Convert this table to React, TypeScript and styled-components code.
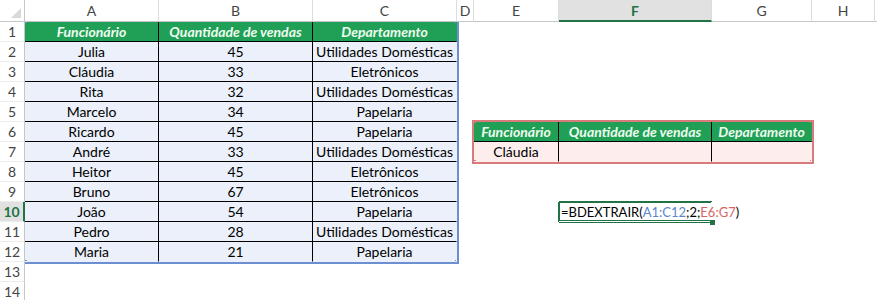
import React from "react";
import styled, { createGlobalStyle, css } from "styled-components";

const TABLE_GREEN = "#20a057";
const EXCEL_GREEN = "#217346";
const REF_BLUE = "#6b8fd0";
const REF_PINK = "#d77b7d";

const GlobalStyle = createGlobalStyle`
  html, body {
    margin: 0;
    padding: 0;
    background: #fff;
    overflow: hidden;
  }
  body {
    font-family: Lato, "Liberation Sans", sans-serif;
  }
`;

const Sheet = styled.div`
  display: grid;
  grid-template-columns: 25px 134px 154px 144px 17px 85px 153px 100px 63px 64px;
  grid-template-rows: 22px repeat(14, 20px);
  width: 939px;
  font-size: 14px;
  color: #000;
`;

const Corner = styled.div`
  position: relative;
  box-sizing: border-box;
  border-right: 1px solid #c6c6c6;
  border-bottom: 1px solid #c6c6c6;

  svg {
    position: absolute;
    right: 3px;
    bottom: 3px;
  }
`;

const ColHead = styled.div<{ $active?: boolean }>`
  box-sizing: border-box;
  display: flex;
  align-items: center;
  justify-content: center;
  color: #444;
  font-size: 14px;
  border-right: 1px solid #dcdcdc;
  border-bottom: 1px solid #c6c6c6;
  background: #fff;

  ${({ $active }) =>
    $active &&
    css`
      background: #e1e1e1;
      color: ${EXCEL_GREEN};
      font-weight: 700;
      border-bottom: 2px solid ${EXCEL_GREEN};
    `}
`;

const RowHead = styled.div<{ $active?: boolean }>`
  box-sizing: border-box;
  display: flex;
  align-items: center;
  justify-content: center;
  color: #444;
  font-size: 14px;
  background: #fff;
  border-right: 1px solid #c6c6c6;
  border-bottom: 1px solid #ececec;

  ${({ $active }) =>
    $active &&
    css`
      background: #e1e1e1;
      color: ${EXCEL_GREEN};
      font-weight: 700;
      border-right: 2px solid ${EXCEL_GREEN};
    `}
`;

type Fill = "none" | "green" | "blue" | "pink";

const fills: Record<Fill, string> = {
  none: "transparent",
  green: TABLE_GREEN,
  blue: "#ebf0fa",
  pink: "#fdeded",
};

// outer 2px ring drawn on chosen edges of a referenced range
const ring = (color: string, edges: string) => {
  const parts: string[] = [];
  if (edges.includes("t")) parts.push(`0 -2px 0 ${color}`);
  if (edges.includes("b")) parts.push(`0 2px 0 ${color}`);
  if (edges.includes("l")) parts.push(`-2px 0 0 ${color}`);
  if (edges.includes("r")) parts.push(`2px 0 0 ${color}`);
  if (edges.includes("r") && edges.includes("b")) parts.push(`2px 2px 0 ${color}`);
  if (edges.includes("r") && edges.includes("t")) parts.push(`2px -2px 0 ${color}`);
  if (edges.includes("l") && edges.includes("b")) parts.push(`-2px 2px 0 ${color}`);
  if (edges.includes("l") && edges.includes("t")) parts.push(`-2px -2px 0 ${color}`);
  return parts.length ? parts.join(", ") : "none";
};

type CellProps = {
  $fill?: Fill;
  $head?: boolean;
  $lineRight?: boolean;
  $lineBottom?: boolean;
  $ring?: string;
  $active?: boolean;
};

const Cell = styled.div<CellProps>`
  position: relative;
  box-sizing: border-box;
  display: flex;
  align-items: center;
  justify-content: center;
  padding: 0 3px;
  min-width: 0;
  white-space: nowrap;
  overflow: hidden;
  background: ${({ $fill }) => fills[$fill ?? "none"]};
  border-right: 1px solid ${({ $lineRight }) => ($lineRight ? "#000" : "transparent")};
  border-bottom: 1px solid ${({ $lineBottom }) => ($lineBottom ? "#000" : "transparent")};
  box-shadow: ${({ $ring }) => $ring ?? "none"};

  ${({ $head }) =>
    $head &&
    css`
      font-weight: 700;
      font-style: italic;
      color: #eefcee;
    `}

  ${({ $active }) =>
    $active &&
    css`
      justify-content: flex-start;
      padding: 0 2px;
      font-size: 13px;
      overflow: visible;
      z-index: 2;
      box-shadow: -1px 0 0 ${EXCEL_GREEN}, inset 1px 0 0 ${EXCEL_GREEN},
        0 -1px 0 ${EXCEL_GREEN}, inset 0 1px 0 ${EXCEL_GREEN},
        0 1px 0 ${EXCEL_GREEN}, inset 0 -1px 0 ${EXCEL_GREEN};
    `}
`;

const Handle = styled.span<{ $color: string; $at: string }>`
  position: absolute;
  z-index: 3;
  width: 5px;
  height: 5px;
  background: ${({ $color }) => $color};
  ${({ $at }) => ($at.includes("t") ? "top: -4px;" : "bottom: -4px;")}
  ${({ $at }) => ($at.includes("l") ? "left: -3px;" : "right: -4px;")}
`;

const Ref = styled.span<{ $color: string }>`
  color: ${({ $color }) => $color};
`;

const Caret = styled.span`
  display: inline-block;
  width: 1px;
  height: 15px;
  margin-left: 1px;
  background: #000;
`;

// the last column only shows its left edge in the frame
const columns = ["A", "B", "C", "D", "E", "F", "G", "H", ""];

const headers = ["Funcionário", "Quantidade de vendas", "Departamento"];

const sales = [
  ["Julia", "45", "Utilidades Domésticas"],
  ["Cláudia", "33", "Eletrônicos"],
  ["Rita", "32", "Utilidades Domésticas"],
  ["Marcelo", "34", "Papelaria"],
  ["Ricardo", "45", "Papelaria"],
  ["André", "33", "Utilidades Domésticas"],
  ["Heitor", "45", "Eletrônicos"],
  ["Bruno", "67", "Eletrônicos"],
  ["João", "54", "Papelaria"],
  ["Pedro", "28", "Utilidades Domésticas"],
  ["Maria", "21", "Papelaria"],
];

const criteria: Record<number, string[]> = {
  6: headers,
  7: ["Cláudia", "", ""],
};

function renderCell(row: number, col: number) {
  const key = `${col}-${row}`;

  // source table A1:C12
  if (col <= 2 && row <= 12) {
    const isHead = row === 1;
    const text = isHead ? headers[col] : sales[row - 2][col];
    let edges = "";
    if (col === 2) edges += "r";
    if (row === 12) edges += "b";
    const corners: string[] = [];
    if (row === 1 && col === 0) corners.push("tl");
    if (row === 1 && col === 2) corners.push("tr");
    if (row === 12 && col === 0) corners.push("bl");
    if (row === 12 && col === 2) corners.push("br");
    return (
      <Cell
        key={key}
        $fill={isHead ? "green" : "blue"}
        $head={isHead}
        $lineRight={col < 2}
        $lineBottom={row < 12}
        $ring={ring(REF_BLUE, edges)}
      >
        {text}
        {corners.map((at) => (
          <Handle key={at} $color={REF_BLUE} $at={at} />
        ))}
      </Cell>
    );
  }

  // criteria range E6:G7
  if (col >= 4 && col <= 6 && criteria[row]) {
    const isHead = row === 6;
    const text = criteria[row][col - 4];
    let edges = isHead ? "t" : "b";
    if (col === 4) edges += "l";
    if (col === 6) edges += "r";
    const corners: string[] = [];
    if (col === 4 || col === 6) {
      corners.push((isHead ? "t" : "b") + (col === 4 ? "l" : "r"));
    }
    return (
      <Cell
        key={key}
        $fill={isHead ? "green" : "pink"}
        $head={isHead}
        $lineRight={col < 6}
        $lineBottom={isHead}
        $ring={ring(REF_PINK, edges)}
      >
        {text}
        {corners.map((at) => (
          <Handle key={at} $color={REF_PINK} $at={at} />
        ))}
      </Cell>
    );
  }

  // active cell F10 being edited
  if (col === 5 && row === 10) {
    return (
      <Cell key={key} $active>
        =BDEXTRAIR(<Ref $color="#5b86cc">A1:C12</Ref>;2;
        <Ref $color="#d8635f">E6:G7</Ref>)
        <Caret />
        <Handle $color={EXCEL_GREEN} $at="br" />
      </Cell>
    );
  }

  return <Cell key={key} />;
}

export default function App() {
  const rows = Array.from({ length: 14 }, (_, i) => i + 1);

  return (
    <>
      <GlobalStyle />
      <Sheet>
        <Corner>
          <svg width="10" height="10" viewBox="0 0 10 10">
            <polygon points="10,0 10,10 0,10" fill="#d9d9d9" />
          </svg>
        </Corner>
        {columns.map((c, i) => (
          <ColHead key={i} $active={c === "F"}>
            {c}
          </ColHead>
        ))}
        {rows.map((row) => (
          <React.Fragment key={row}>
            <RowHead $active={row === 10}>{row}</RowHead>
            {columns.map((_, col) => renderCell(row, col))}
          </React.Fragment>
        ))}
      </Sheet>
    </>
  );
}
